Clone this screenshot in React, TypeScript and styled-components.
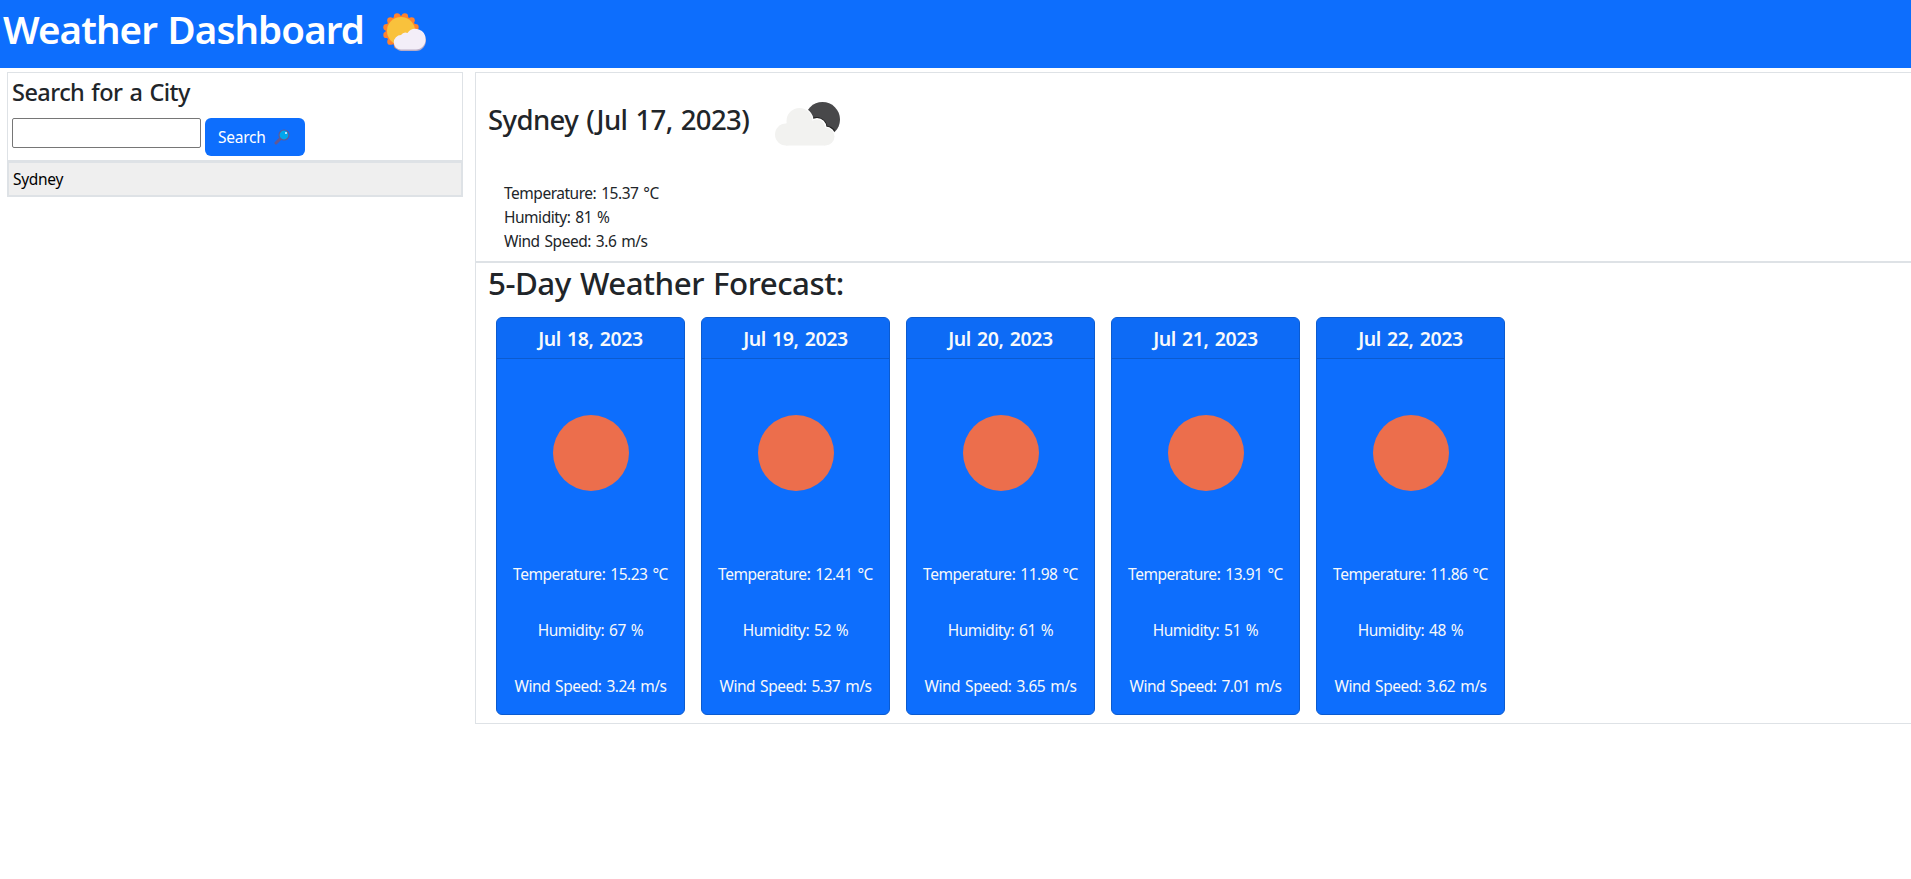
import React from "react";
import styled, { createGlobalStyle } from "styled-components";

const GlobalStyle = createGlobalStyle`
  *, *::before, *::after { box-sizing: border-box; }
  body {
    margin: 0;
    background: #fff;
    color: #212529;
    font: 400 15.5px/24px "Noto Sans", "Open Sans", sans-serif;
    letter-spacing: -0.48px;
    word-spacing: 1.4px;
    overflow-x: hidden;
  }
  h1, h2, h3, h4, h5, p { margin: 0; }
`;

const Header = styled.header`
  display: flex;
  align-items: flex-start;
  height: 68px;
  padding: 5px 4px 4px 3px;
  background: #0d6efd;
  color: #fff;
`;

const Heading = styled.h2<{ $size: number; $line: number; $spacing?: number; $weight?: number }>`
  font-size: ${(p) => p.$size}px;
  line-height: ${(p) => p.$line}px;
  font-weight: ${(p) => p.$weight ?? 500};
  letter-spacing: ${(p) => p.$spacing ?? 0}px;
  word-spacing: 1.5px;
  white-space: nowrap;
`;

const HeaderIcon = styled.svg`
  display: block;
  width: 44px;
  height: 40px;
  margin: 7px 0 0 19px;
`;

const Layout = styled.main`
  display: grid;
  grid-template-columns: 456px 1fr;
  column-gap: 12px;
  align-items: start;
  padding: 4px 0 0 7px;
`;

const SearchBox = styled.section`
  height: 89px;
  padding: 5px 4px 4px;
  border: 1px solid #dee2e6;
`;

const SearchForm = styled.div`
  display: flex;
  align-items: flex-start;
  gap: 4px;
  margin-top: 11px;
`;

const CityInput = styled.input`
  width: 189px;
  height: 30px;
  border: 1px solid #767676;
  border-radius: 2px;
  background: #fff;
`;

const SearchButton = styled.button`
  display: flex;
  align-items: center;
  width: 100px;
  height: 38px;
  padding: 0 13px;
  border: 0;
  border-radius: 6px;
  background: #0d6efd;
  color: #fff;
  font: inherit;
  letter-spacing: -0.25px;
`;

const GlassIcon = styled.svg`
  width: 16px;
  height: 16px;
  margin-left: 8px;
`;

const HistoryButton = styled.button`
  display: block;
  width: 100%;
  height: 36px;
  padding: 0 4px;
  border: 2px solid #dee2e6;
  background: #efefef;
  color: #000;
  font: inherit;
  letter-spacing: -0.3px;
  text-align: left;
`;

const CurrentBox = styled.section`
  height: 190px;
  padding: 0 12px;
  border: 1px solid #dee2e6;
  border-right: 0;
`;

const CurrentTitle = styled.div`
  display: flex;
  align-items: flex-start;
  height: 94px;
  padding-top: 30px;
`;

const CloudIcon = styled.svg`
  width: 66px;
  height: 44px;
  margin-left: 25px;
  margin-top: -1px;
`;

const Readings = styled.div`
  padding: 14px 16px 0;
`;

const ForecastBox = styled.section`
  height: 462px;
  padding: 1px 12px 0;
  border: 1px solid #dee2e6;
  border-right: 0;
`;

const CardRow = styled.div`
  display: flex;
  gap: 16px;
  padding: 15px 8px 0;
`;

const Card = styled.article`
  width: 189px;
  height: 398px;
  border: 1px solid #0b5bd0;
  border-radius: 6px;
  background: #0d6efd;
  color: #f8f9fa;
  text-align: center;
  overflow: hidden;
`;

const CardHeader = styled.div`
  height: 41px;
  padding: 9px 0 7px;
  border-bottom: 1px solid #0b5bd0;
  background: #0d6bf6;
`;

const CardPicture = styled.div`
  display: flex;
  align-items: center;
  justify-content: center;
  height: 187px;
  padding: 1px 0 0 1px;
`;

const SunDisc = styled.div`
  width: 76.5px;
  height: 76.5px;
  border-radius: 50%;
  background: #ec6e4c;
`;

const CardLine = styled.p`
  padding: 16px 0;
  white-space: nowrap;
`;

const days = [
  { date: "Jul 18, 2023", temp: "15.23", humidity: 67, wind: "3.24" },
  { date: "Jul 19, 2023", temp: "12.41", humidity: 52, wind: "5.37" },
  { date: "Jul 20, 2023", temp: "11.98", humidity: 61, wind: "3.65" },
  { date: "Jul 21, 2023", temp: "13.91", humidity: 51, wind: "7.01" },
  { date: "Jul 22, 2023", temp: "11.86", humidity: 48, wind: "3.62" },
];

const petals = Array.from({ length: 12 }, (_, i) => {
  const a = (i * Math.PI) / 6 + 0.26;
  return { x: 18 + 15 * Math.cos(a), y: 19 + 15 * Math.sin(a) };
});

export default function App() {
  return (
    <>
      <GlobalStyle />
      <Header>
        <Heading as="h1" $size={38.5} $line={48} $weight={600} $spacing={-0.92}>Weather Dashboard</Heading>
        <HeaderIcon viewBox="0 0 44 40">
          {petals.map((p, i) => (
            <circle key={i} cx={p.x} cy={p.y} r="3.2" fill="#ff822d" />
          ))}
          <circle cx="18" cy="19" r="15.5" fill="#ff822d" />
          <circle cx="18" cy="19" r="14" fill="#f9c23c" />
          <path d="M18 39a8 8 0 0 1-6-12l25-8a11 11 0 0 1 6 9c0 6-4 11-10 11z" fill="#b9acc4" />
          <path d="M18 37.500a7.200 7.200 0 0 1 0-14.400 5.500 5.500 0 0 1 6.500-2.100A10 10 0 0 1 42.500 27.500c0 5.500-4 10-9.500 10z" fill="#f3eef8" />
        </HeaderIcon>
      </Header>
      <Layout>
        <div>
          <SearchBox>
            <Heading as="h4" $size={23.5} $line={29} $spacing={-0.55}>Search for a City</Heading>
            <SearchForm>
              <CityInput type="text" aria-label="City" />
              <SearchButton>
                Search
                <GlassIcon viewBox="0 0 16 16">
                  <path d="M2 14 7 9" stroke="#635994" strokeWidth="3" strokeLinecap="round" />
                  <circle cx="10" cy="6" r="5" fill="#00a6ed" stroke="#635994" strokeWidth="1.2" />
                  <circle cx="12" cy="4" r="1" fill="#e8f8ff" />
                </GlassIcon>
              </SearchButton>
            </SearchForm>
          </SearchBox>
          <HistoryButton>Sydney</HistoryButton>
        </div>
        <div>
          <CurrentBox>
            <CurrentTitle>
              <Heading as="h3" $size={27.5} $line={34} $spacing={-0.6}>Sydney (Jul 17, 2023)</Heading>
              <CloudIcon viewBox="0 0 66 44">
                <circle cx="48.500" cy="17.500" r="17.500" fill="#48484a" />
                <path
                  d="M34 13a13 13 0 0 1 3 6a9 9 0 0 1 14.500 7a9 9 0 0 1 8 3.500"
                  fill="none"
                  stroke="#222"
                  strokeWidth="4"
                />
                <g fill="#fff" stroke="#fff" strokeWidth="2">
                  <circle cx="25.500" cy="19" r="13" />
                  <circle cx="43" cy="25.500" r="8.500" />
                  <circle cx="51.500" cy="34.500" r="9" />
                </g>
                <g fill="#f2f2f0">
                  <circle cx="25.500" cy="19" r="13" />
                  <circle cx="43" cy="25.500" r="8" />
                  <circle cx="51.500" cy="34.500" r="9" />
                  <circle cx="12" cy="32.500" r="11" />
                  <path d="M12 21.500h26v4h13v18H12z" />
                </g>
              </CloudIcon>
            </CurrentTitle>
            <Readings>
              <p>Temperature: 15.37 °C</p>
              <p>Humidity: 81 %</p>
              <p>Wind Speed: 3.6 m/s</p>
            </Readings>
          </CurrentBox>
          <ForecastBox>
            <Heading $size={31.3} $line={38} $spacing={-0.5}>5-Day Weather Forecast:</Heading>
            <CardRow>
              {days.map((d) => (
                <Card key={d.date}>
                  <CardHeader>
                    <Heading as="h5" $size={19.5} $line={24} $weight={600} $spacing={-0.4}>{d.date}</Heading>
                  </CardHeader>
                  <CardPicture><SunDisc /></CardPicture>
                  <CardLine>Temperature: {d.temp} °C</CardLine>
                  <CardLine>Humidity: {d.humidity} %</CardLine>
                  <CardLine>Wind Speed: {d.wind} m/s</CardLine>
                </Card>
              ))}
            </CardRow>
          </ForecastBox>
        </div>
      </Layout>
    </>
  );
}
